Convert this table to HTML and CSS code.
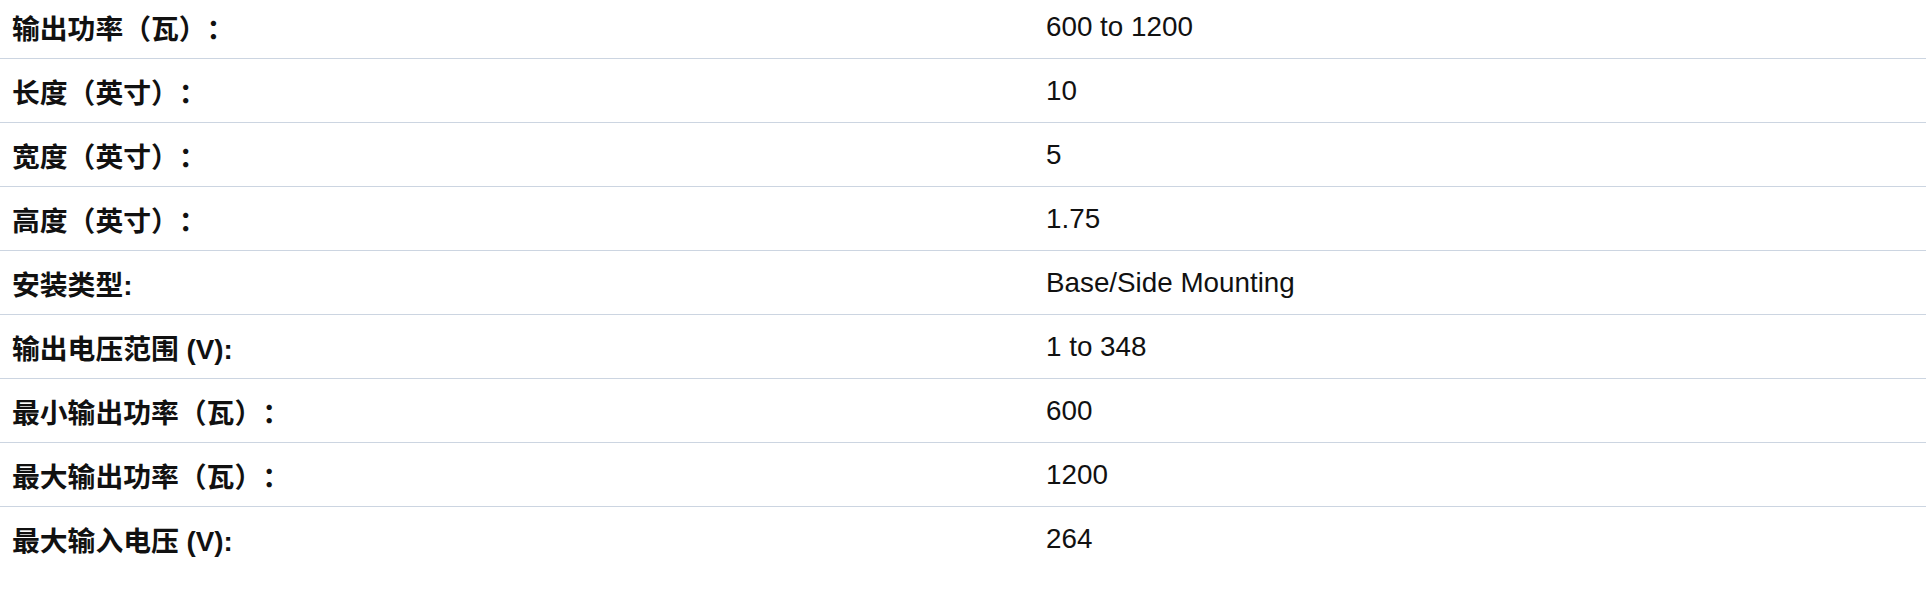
FILE: index.html
```html
<!DOCTYPE html>
<html lang="zh-CN">
<head>
<meta charset="utf-8">
<title>规格</title>
<link rel="stylesheet" href="styles.css">
</head>
<body>
<div class="specs">
  <div class="row"><div class="label">输出功率（瓦）：</div><div class="value">600 to 1200</div></div>
  <div class="row"><div class="label">长度（英寸）：</div><div class="value">10</div></div>
  <div class="row"><div class="label">宽度（英寸）：</div><div class="value">5</div></div>
  <div class="row"><div class="label">高度（英寸）：</div><div class="value">1.75</div></div>
  <div class="row"><div class="label">安装类型:</div><div class="value">Base/Side Mounting</div></div>
  <div class="row"><div class="label">输出电压范围 (V):</div><div class="value">1 to 348</div></div>
  <div class="row"><div class="label">最小输出功率（瓦）：</div><div class="value">600</div></div>
  <div class="row"><div class="label">最大输出功率（瓦）：</div><div class="value">1200</div></div>
  <div class="row"><div class="label">最大输入电压 (V):</div><div class="value">264</div></div>
</div>
</body>
</html>
```

FILE: styles.css
```css
html, body {
  margin: 0;
  padding: 0;
  background: #ffffff;
}

body {
  font-family: "Liberation Sans", "Noto Sans CJK SC", Arial, sans-serif;
  font-size: 27.8px;
  color: #111111;
  overflow: hidden;
  text-spacing-trim: space-all;
}

.specs {
  margin-top: -5px;
  display: flex;
  flex-direction: column;
}

.row {
  display: grid;
  grid-template-columns: 1033px 1fr;
  align-items: center;
  height: 63px;
  border-bottom: 1px solid #ccd5e1;
}

.row:last-child {
  border-bottom: none;
}

.label {
  padding: 0 12px;
  font-weight: bold;
  white-space: nowrap;
  text-spacing-trim: space-all;
}

.value {
  padding: 0 12px 0 13px;
  white-space: nowrap;
}
```
